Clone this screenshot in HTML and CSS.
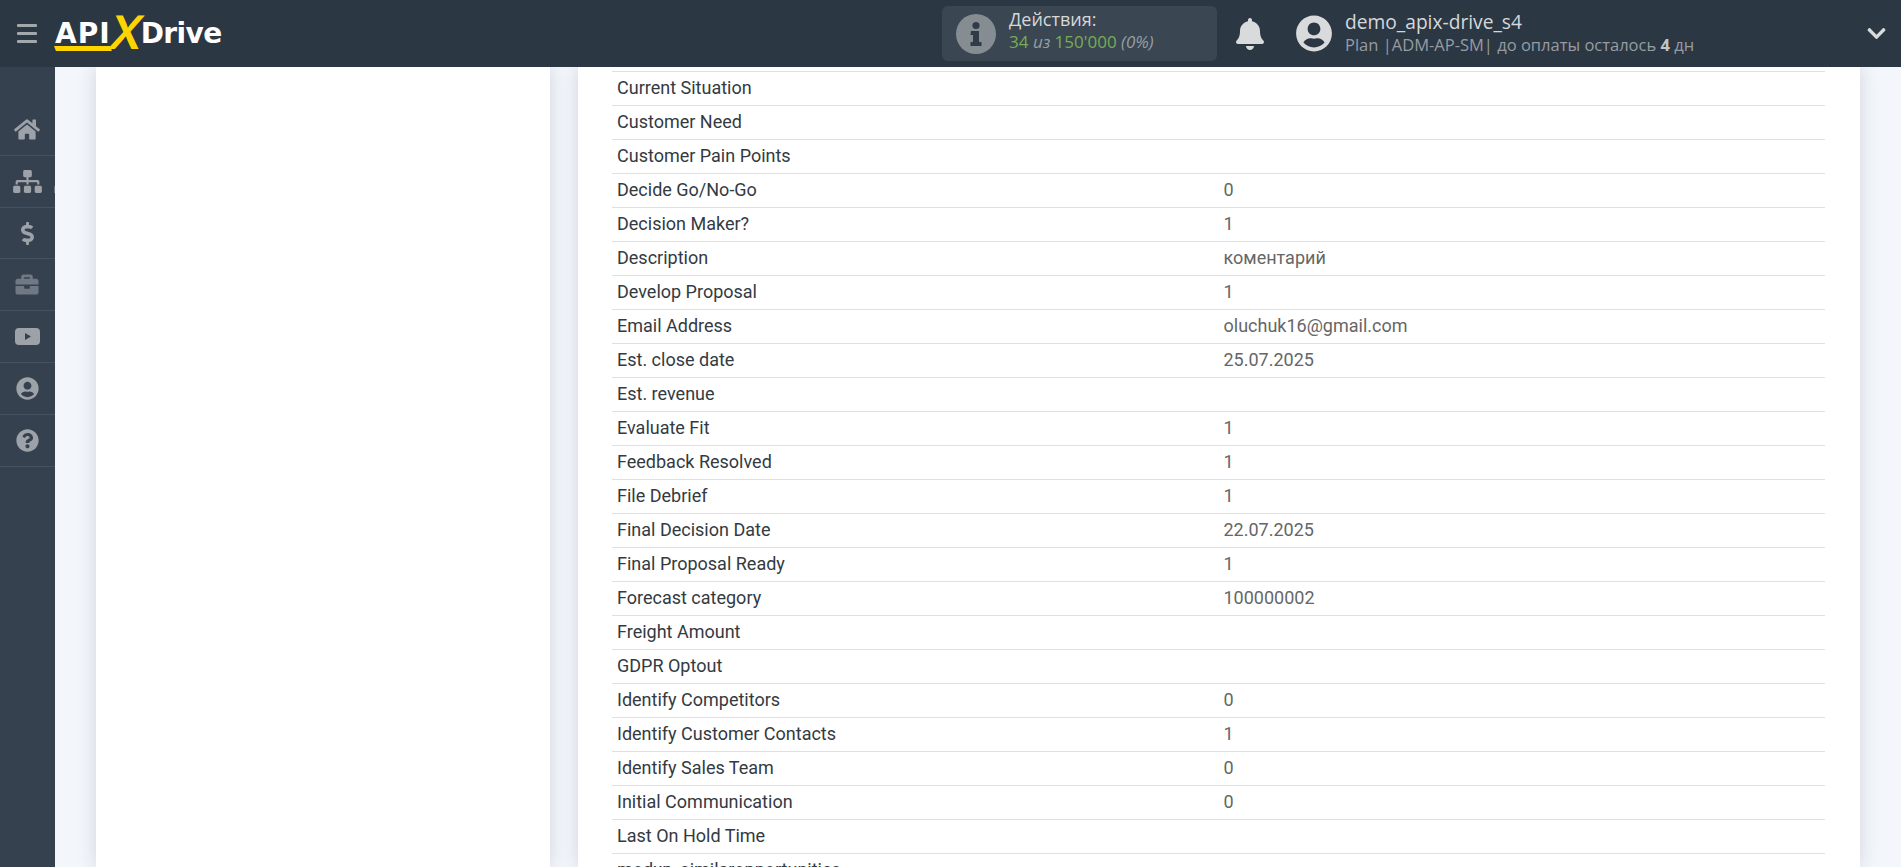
FILE: index.html
```html
<!DOCTYPE html>
<html lang="ru">
<head>
<meta charset="utf-8">
<title>ApiX-Drive</title>
<link rel="stylesheet" href="styles.css">
</head>
<body>
<header class="topbar">
  <div class="burger"><span></span><span></span><span></span></div>
  <div class="logo"><span class="logo-api">API</span><span class="logo-x">X</span><span class="logo-drive">Drive</span></div>
  <div class="actions">
    <svg class="info-icon" viewBox="0 0 40 40"><circle cx="20" cy="20" r="20" fill="#858d93"/><circle cx="20" cy="11.5" r="3.6" fill="#2f3b47"/><path d="M15 17h8v11h2.500v4h-11v-4h2.500v-7h-2.500z" fill="#2f3b47"/></svg>
    <div class="actions-text">
      <div class="actions-title">Действия:</div>
      <div class="actions-count"><span class="green">34</span> <i>из</i> <span class="green">150'000</span> <i>(0%)</i></div>
    </div>
  </div>
  <svg class="bell" viewBox="0 0 448 512"><path d="M224 512c35.320 0 63.970-28.650 63.970-64H160.030c0 35.350 28.650 64 63.970 64zm215.390-149.710c-19.320-20.760-55.470-51.990-55.470-154.290 0-77.700-54.480-139.900-127.940-155.160V32c0-17.670-14.320-32-31.980-32s-31.980 14.330-31.980 32v20.840C118.560 68.100 64.080 130.300 64.080 208c0 102.300-36.150 133.530-55.470 154.290-6 6.450-8.660 14.160-8.610 21.710.11 16.400 12.980 32 32.100 32h383.800c19.120 0 32-15.600 32.100-32 .05-7.550-2.610-15.270-8.610-21.710z"/></svg>
  <svg class="avatar" viewBox="0 0 496 512"><path d="M248 8C111 8 0 119 0 256s111 248 248 248 248-111 248-248S385 8 248 8zm0 96c48.600 0 88 39.400 88 88s-39.400 88-88 88-88-39.400-88-88 39.400-88 88-88zm0 344c-58.700 0-111.300-26.600-146.500-68.200 18.800-35.400 55.600-59.800 98.500-59.800 2.400 0 4.800.4 7.100 1.100 13 4.200 26.600 6.900 40.900 6.900 14.300 0 28-2.700 40.900-6.900 2.300-.7 4.700-1.100 7.100-1.100 42.900 0 79.700 24.400 98.500 59.800C359.300 421.400 306.700 448 248 448z"/></svg>
  <div class="user">
    <div class="user-name">demo_apix-drive_s4</div>
    <div class="user-plan">Plan |ADM-AP-SM| до оплаты осталось <b>4</b> дн</div>
  </div>
  <svg class="chevron" viewBox="0 0 448 512"><path d="M207.029 381.476L12.686 187.132c-9.373-9.373-9.373-24.569 0-33.941l22.667-22.667c9.357-9.357 24.522-9.375 33.901-.04L224 284.505l154.745-154.021c9.379-9.335 24.544-9.317 33.901.04l22.667 22.667c9.373 9.373 9.373 24.569 0 33.941L240.971 381.476c-9.373 9.372-24.569 9.372-33.942 0z"/></svg>
</header>
<div class="layout">
  <nav class="sidebar">
    <a class="nav-item"><svg class="nav-icon icon-home" viewBox="0 0 576 512"><path d="M280.370 148.260L96 300.110V464a16 16 0 0 0 16 16l112.060-.29a16 16 0 0 0 15.920-16V368a16 16 0 0 1 16-16h64a16 16 0 0 1 16 16v95.640a16 16 0 0 0 16 16.050L464 480a16 16 0 0 0 16-16V300L295.670 148.260a12.190 12.190 0 0 0-15.300 0zM571.600 251.470L488 182.560V44.050a12 12 0 0 0-12-12h-56a12 12 0 0 0-12 12v72.610L318.470 43a48 48 0 0 0-61 0L4.340 251.470a12 12 0 0 0-1.600 16.900l25.500 31A12 12 0 0 0 45.150 301l235.220-193.740a12.190 12.190 0 0 1 15.300 0L530.900 301a12 12 0 0 0 16.900-1.600l25.500-31a12 12 0 0 0-1.700-16.930z"/></svg></a>
    <a class="nav-item tick"><svg class="nav-icon icon-map" viewBox="0 0 640 512"><path d="M128 352H32c-17.670 0-32 14.330-32 32v96c0 17.670 14.330 32 32 32h96c17.670 0 32-14.330 32-32v-96c0-17.670-14.330-32-32-32zm-24-80h192v48h48v-48h192v48h48v-57.590c0-21.170-17.230-38.410-38.410-38.410H344v-64h40c17.670 0 32-14.330 32-32V32c0-17.670-14.330-32-32-32H256c-17.670 0-32 14.330-32 32v96c0 17.670 14.330 32 32 32h40v64H94.410C73.230 224 56 241.230 56 262.410V320h48v-48zm264 80h-96c-17.670 0-32 14.330-32 32v96c0 17.670 14.330 32 32 32h96c17.670 0 32-14.330 32-32v-96c0-17.670-14.330-32-32-32zm240 0h-96c-17.670 0-32 14.330-32 32v96c0 17.670 14.330 32 32 32h96c17.670 0 32-14.330 32-32v-96c0-17.670-14.330-32-32-32z"/></svg></a>
    <a class="nav-item"><svg class="nav-icon" viewBox="0 0 288 512"><path d="M209.200 233.400l-108-31.600C88.700 198.200 80 186.500 80 173.500c0-16.300 13.200-29.500 29.500-29.500h66.300c12.200 0 24.200 3.700 34.200 10.500 6.100 4.100 14.300 3.100 19.500-2l34.800-34c7.100-6.900 6.100-18.400-1.800-24.500C238 74.800 207.400 64.100 176 64V16c0-8.800-7.200-16-16-16h-32c-8.800 0-16 7.200-16 16v48h-2.500C45.800 64-5.400 118.700.5 183.600c4.200 46.100 39.400 83.600 83.800 96.600l102.500 30c12.500 3.700 21.200 15.300 21.200 28.300 0 16.300-13.200 29.500-29.500 29.500h-66.300C100 368 88 364.300 78 357.500c-6.100-4.100-14.300-3.100-19.500 2l-34.800 34c-7.100 6.900-6.100 18.400 1.800 24.500 24.500 19.200 55.100 29.900 86.500 30v48c0 8.800 7.200 16 16 16h32c8.800 0 16-7.200 16-16v-48.200c46.600-.9 90.300-28.600 105.700-72.700 21.500-61.600-14.600-124.800-72.500-141.700z"/></svg></a>
    <a class="nav-item"><svg class="nav-icon dim icon-case" viewBox="0 0 512 512"><path d="M320 336c0 8.840-7.160 16-16 16h-96c-8.840 0-16-7.160-16-16v-48H0v144c0 25.600 22.400 48 48 48h416c25.600 0 48-22.400 48-48V288H320v48zm144-208h-80V80c0-25.600-22.400-48-48-48H176c-25.600 0-48 22.400-48 48v48H48c-25.600 0-48 22.400-48 48v80h512v-80c0-25.600-22.400-48-48-48zm-144 0H192V96h128v32z"/></svg></a>
    <a class="nav-item"><svg class="nav-icon icon-video" viewBox="0 0 25 17"><rect x="0" y="0" width="25" height="17" rx="4"/><path class="play" d="M10 5l6 3.500-6 3.500z"/></svg></a>
    <a class="nav-item"><svg class="nav-icon" viewBox="0 0 496 512"><path d="M248 8C111 8 0 119 0 256s111 248 248 248 248-111 248-248S385 8 248 8zm0 96c48.600 0 88 39.400 88 88s-39.400 88-88 88-88-39.400-88-88 39.400-88 88-88zm0 344c-58.700 0-111.300-26.600-146.500-68.200 18.800-35.400 55.600-59.800 98.500-59.800 2.400 0 4.800.4 7.100 1.100 13 4.200 26.600 6.900 40.900 6.900 14.300 0 28-2.700 40.900-6.900 2.300-.7 4.700-1.100 7.100-1.100 42.900 0 79.700 24.400 98.500 59.800C359.300 421.400 306.700 448 248 448z"/></svg></a>
    <a class="nav-item"><svg class="nav-icon" viewBox="0 0 512 512"><path d="M504 256c0 136.997-111.043 248-248 248S8 392.997 8 256C8 119.083 119.043 8 256 8s248 111.083 248 248zM262.655 90c-54.497 0-89.255 22.957-116.549 63.758-3.536 5.286-2.353 12.415 2.715 16.258l34.699 26.310c5.205 3.947 12.621 3.008 16.665-2.122 17.864-22.658 30.113-35.797 57.303-35.797 20.429 0 45.698 13.148 45.698 32.958 0 14.976-12.363 22.667-32.534 33.976C247.128 238.528 216 254.941 216 296v4c0 6.627 5.373 12 12 12h56c6.627 0 12-5.373 12-12v-1.333c0-28.462 83.186-29.647 83.186-106.667 0-58.002-60.165-102-116.531-102zM256 338c-25.365 0-46 20.635-46 46 0 25.364 20.635 46 46 46s46-20.636 46-46c0-25.365-20.635-46-46-46z"/></svg></a>
  </nav>
  <main class="content">
    <section class="card card-left"></section>
    <section class="card card-right">
      <table class="fields">
        <tbody>
          <tr><td>Current Situation</td><td></td></tr>
          <tr><td>Customer Need</td><td></td></tr>
          <tr><td>Customer Pain Points</td><td></td></tr>
          <tr><td>Decide Go/No-Go</td><td>0</td></tr>
          <tr><td>Decision Maker?</td><td>1</td></tr>
          <tr><td>Description</td><td>коментарий</td></tr>
          <tr><td>Develop Proposal</td><td>1</td></tr>
          <tr><td>Email Address</td><td>oluchuk16@gmail.com</td></tr>
          <tr><td>Est. close date</td><td>25.07.2025</td></tr>
          <tr><td>Est. revenue</td><td></td></tr>
          <tr><td>Evaluate Fit</td><td>1</td></tr>
          <tr><td>Feedback Resolved</td><td>1</td></tr>
          <tr><td>File Debrief</td><td>1</td></tr>
          <tr><td>Final Decision Date</td><td>22.07.2025</td></tr>
          <tr><td>Final Proposal Ready</td><td>1</td></tr>
          <tr><td>Forecast category</td><td>100000002</td></tr>
          <tr><td>Freight Amount</td><td></td></tr>
          <tr><td>GDPR Optout</td><td></td></tr>
          <tr><td>Identify Competitors</td><td>0</td></tr>
          <tr><td>Identify Customer Contacts</td><td>1</td></tr>
          <tr><td>Identify Sales Team</td><td>0</td></tr>
          <tr><td>Initial Communication</td><td>0</td></tr>
          <tr><td>Last On Hold Time</td><td></td></tr>
          <tr><td>modxp_similaropportunities</td><td></td></tr>
        </tbody>
      </table>
    </section>
  </main>
</div>
</body>
</html>
```
FILE: styles.css
```css
* { box-sizing: border-box; }
html, body { margin: 0; height: 867px; overflow: hidden; }
body { font-family: "Roboto", "Liberation Sans", sans-serif; background: #f3f6fb; }

.topbar {
  height: 67px;
  background: #2c3744;
  display: flex;
  align-items: center;
  font-family: "Open Sans", "Liberation Sans", sans-serif;
  position: relative;
  z-index: 2;
}
.burger {
  width: 20px;
  margin-left: 17px;
  display: flex;
  flex-direction: column;
  gap: 5px;
}
.burger span { height: 3px; border-radius: 1px; background: #a3a8ad; }

.logo {
  margin-left: 18px;
  width: 167px;
  flex: none;
  display: flex;
  align-items: center;
  font-family: "DejaVu Sans", "Inter", sans-serif;
  font-weight: 700;
  font-size: 28px;
  color: #fff;
  position: relative;
  height: 50px;
}
.logo-api { letter-spacing: 1px; }
.logo-drive { letter-spacing: -0.600px; }
.logo::after {
  content: "";
  position: absolute;
  left: 0;
  top: 37px;
  width: 56px;
  height: 5px;
  background: #ffd500;
  transform: skewX(20deg);
}
.logo-x {
  color: #ffd500;
  font-family: "Inter", sans-serif;
  font-size: 46px;
  font-weight: 600;
  margin: -4px -2px 0 -1px;
  line-height: 1;
  transform: skewX(-12deg);
}

.actions {
  margin-left: 720px;
  width: 275px;
  height: 55px;
  flex: none;
  border-radius: 6px;
  background: #3a4752;
  display: flex;
  align-items: center;
  padding-left: 14px;
  gap: 13px;
}
.info-icon { width: 40px; height: 40px; flex: none; }
.actions-text { margin-top: -6px; }
.actions-title { font-size: 18px; line-height: 23px; color: #d5d8da; }
.actions-count { font-size: 17px; line-height: 22px; color: #989ea3; }
.actions-count .green { color: #78ac52; }

.bell { width: 28px; height: 32px; fill: #d9dadc; margin-left: 19px; flex: none; }
.avatar { width: 36px; height: 37px; fill: #d9dadc; margin-left: 32px; flex: none; }
.user { margin-left: 13px; width: 522px; flex: none; }
.user-name { font-size: 19.200px; line-height: 24px; margin-top: -2px; color: #d5d8da; }
.user-plan { font-size: 16.500px; line-height: 22px; color: #969ca2; }
.user-plan b { color: #c2c5c8; }
.chevron { width: 19px; height: 21px; fill: #d9dadc; flex: none; }

.layout { display: flex; height: 800px; }

.sidebar {
  width: 55px;
  flex: none;
  background: #364150;
  padding-top: 37px;
}
.nav-item {
  display: flex;
  align-items: center;
  justify-content: center;
  height: 51.830px;
  padding-right: 1px;
  border-bottom: 1px solid #47515f;
  position: relative;
}
.tick::after {
  content: "";
  position: absolute;
  right: 0;
  top: 30px;
  width: 1px;
  height: 7px;
  background: #6b7480;
}
.nav-icon { width: 23px; height: 23px; fill: #9da2a9; }
.icon-home { width: 26px; }
.icon-map { width: 29px; }
.icon-case { width: 24px; }
.icon-video { width: 25px; height: 17px; }
.nav-icon.dim { fill: #707884; }
.nav-icon .play { fill: #364150; }

.content {
  flex: 1;
  display: flex;
  gap: 28px;
  padding: 0 41px;
  overflow: hidden;
  align-items: stretch;
}
.card { background: #fff; box-shadow: 0 0 18px rgba(40, 50, 70, 0.16); }
.card-left { width: 454px; flex: none; }
.card-right { width: 1282px; flex: none; padding: 4px 35px 0 34px; overflow: hidden; }

.fields {
  width: 100%;
  border-collapse: collapse;
  table-layout: fixed;
  border-top: 1px solid #e0e0e0;
  font-size: 18px;
}
.fields tr { height: 34px; border-bottom: 1px solid #e0e0e0; }
.fields td { padding: 0 0 2px 5px; line-height: 20px; color: #666; }
.fields td:first-child { color: #333a42; }
```
